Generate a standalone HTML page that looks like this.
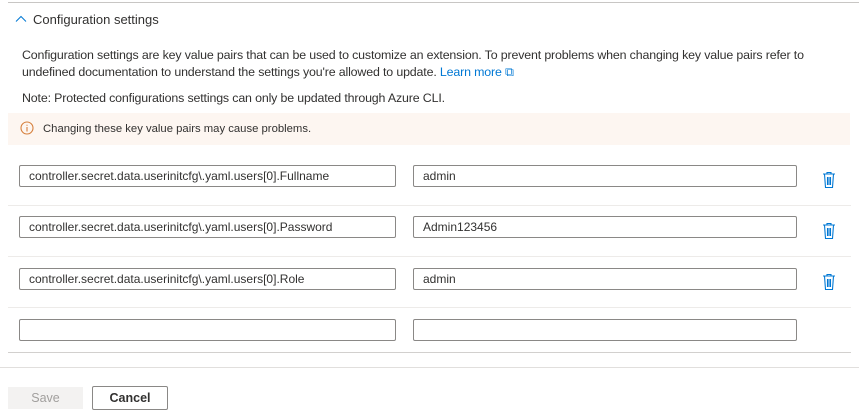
<!DOCTYPE html>
<html><head><style>
body{margin:0;width:859px;height:420px;background:#fff;font-family:"Liberation Sans",sans-serif;color:#323130;position:relative;overflow:hidden}
.a{position:absolute}
.t{font-size:12.5px;white-space:nowrap}
.in{position:absolute;height:20px;border:1px solid #8a8886;border-radius:2px;font-size:12px;line-height:21px;padding-left:9px;box-sizing:content-box;color:#323130}
.hr{position:absolute;height:1px;background:#edebe9}
.trash{position:absolute;width:14px;height:18px}
</style></head><body>
<div class="hr" style="left:8px;top:2px;width:851px;background:#c8c6c4"></div>
<svg class="a" style="left:15px;top:15px" width="12" height="8"><path d="M1 6.5 L6 1.5 L11 6.5" stroke="#0078d4" fill="none" stroke-width="1"/></svg>
<div class="a t" style="left:33px;top:12px;font-size:13px">Configuration settings</div>
<div class="a t" style="left:22px;top:48px;font-size:12.4px;letter-spacing:-0.15px">Configuration settings are key value pairs that can be used to customize an extension. To prevent problems when changing key value pairs refer to</div>
<div class="a t" style="left:22px;top:65px;font-size:12.4px;letter-spacing:-0.15px">undefined documentation to understand the settings you're allowed to update. <span style="color:#0078d4">Learn more ⧉</span></div>
<div class="a t" style="left:22px;top:91px;font-size:12.4px;letter-spacing:-0.15px">Note: Protected configurations settings can only be updated through Azure CLI.</div>
<div class="a" style="left:8px;top:113px;width:842px;height:32px;background:#fdf6f1"></div>
<svg class="a" style="left:20px;top:121px" width="14" height="14"><circle cx="7" cy="7" r="6" stroke="#d67f3c" fill="none" stroke-width="1.1"/><path d="M7 6v4.5M7 3.8v1" stroke="#d67f3c" stroke-width="1.1"/></svg>
<div class="a t" style="left:43px;top:123px;font-size:11.3px">Changing these key value pairs may cause problems.</div>

<div class="in" style="left:19px;top:165px;width:366px">controller.secret.data.userinitcfg\.yaml.users[0].Fullname</div>
<div class="in" style="left:413px;top:165px;width:373px">admin</div>
<div class="hr" style="left:8px;top:205px;width:843px"></div>
<div class="in" style="left:19px;top:216px;width:366px">controller.secret.data.userinitcfg\.yaml.users[0].Password</div>
<div class="in" style="left:413px;top:216px;width:373px">Admin123456</div>
<div class="hr" style="left:8px;top:256px;width:843px"></div>
<div class="in" style="left:19px;top:268px;width:366px">controller.secret.data.userinitcfg\.yaml.users[0].Role</div>
<div class="in" style="left:413px;top:268px;width:373px">admin</div>
<div class="hr" style="left:8px;top:307px;width:843px"></div>
<div class="in" style="left:19px;top:319px;width:366px"></div>
<div class="in" style="left:413px;top:319px;width:373px"></div>
<div class="hr" style="left:8px;top:352px;width:843px;background:#d2d0ce"></div>
<div class="hr" style="left:0;top:367px;width:859px;background:#e1dfdd"></div>

<svg class="trash" style="left:822px;top:171px" viewBox="0 0 14 18"><path d="M1 3h12M5 3V1.5h4V3M2.5 3l1 13.5h7l1-13.5M5.5 6v8M7 6v8M8.5 6v8" stroke="#0078d4" fill="none" stroke-width="1.1"/></svg>
<svg class="trash" style="left:822px;top:222px" viewBox="0 0 14 18"><path d="M1 3h12M5 3V1.5h4V3M2.5 3l1 13.5h7l1-13.5M5.5 6v8M7 6v8M8.5 6v8" stroke="#0078d4" fill="none" stroke-width="1.1"/></svg>
<svg class="trash" style="left:822px;top:273px" viewBox="0 0 14 18"><path d="M1 3h12M5 3V1.5h4V3M2.5 3l1 13.5h7l1-13.5M5.5 6v8M7 6v8M8.5 6v8" stroke="#0078d4" fill="none" stroke-width="1.1"/></svg>

<div class="a" style="left:8px;top:387px;width:75px;height:22px;background:#f3f2f1;color:#a19f9d;font-size:12.5px;line-height:22px;text-align:center">Save</div>
<div class="a" style="left:92px;top:386px;width:74px;height:22px;border:1px solid #8a8886;border-radius:2px;font-size:12.5px;font-weight:bold;line-height:23px;text-align:center">Cancel</div>
</body></html>
